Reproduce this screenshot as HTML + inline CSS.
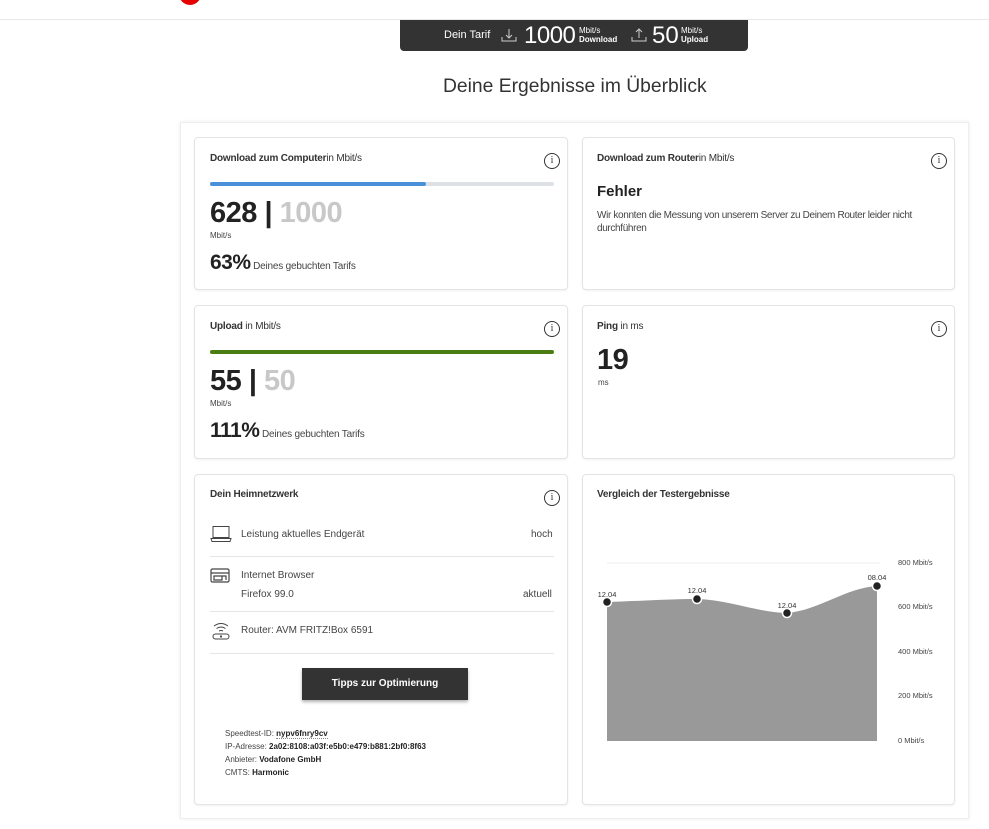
<!DOCTYPE html>
<html><head><meta charset="utf-8"><style>
*{margin:0;padding:0;box-sizing:border-box}
body{width:989px;height:829px;background:#fff;font-family:"Liberation Sans",sans-serif;color:#333;position:relative;overflow:hidden}
.a{position:absolute}
.card{position:absolute;background:#fff;border:1px solid #e4e4e4;border-radius:4px;box-shadow:0 1px 2px rgba(0,0,0,.06)}
.t{font-size:10px;color:#333;letter-spacing:-.2px}
.t b{font-weight:bold}
.info{position:absolute;width:16px;height:16px;border:1.3px solid #333;border-radius:50%;font-size:10px;text-align:center;line-height:13px;font-family:"Liberation Serif",serif}
.big{font-size:29px;font-weight:bold;color:#222;letter-spacing:-.5px}
.gr{color:#c8c8c8}
.u{font-size:8px;color:#444}
.pct{font-size:21px;font-weight:bold;color:#222;letter-spacing:-.5px}
.pct span{font-size:10px;font-weight:normal;color:#444;letter-spacing:-.2px}
.row{font-size:10px;color:#444}
.hr{position:absolute;height:1px;background:#e6e6e6}
.yl{position:absolute;font-size:7.5px;color:#444;left:898px}
</style></head><body>
<div class="a" style="left:0;top:19px;width:989px;height:1px;background:#e8e8e8"></div>
<div class="a" style="left:179px;top:-10px;width:22px;height:15px;border-radius:0 0 11px 11px;background:#e60000"></div>

<div class="a" style="left:400px;top:20px;width:348px;height:31px;background:#333;border-radius:0 0 4px 4px;color:#fff">
 <span class="a" style="left:44px;top:9px;font-size:11px">Dein Tarif</span>
 <svg class="a" style="left:101px;top:8px" width="16" height="14" viewBox="0 0 16 14" fill="none" stroke="#ccc" stroke-width="1"><path d="M8 1v9M5 7l3 3 3-3M1 9v4h14V9"/></svg>
 <span class="a" style="left:124px;top:2px;font-size:24px;letter-spacing:-.5px">1000</span>
 <span class="a" style="left:179px;top:6px;font-size:8px;line-height:9px">Mbit/s<br><b>Download</b></span>
 <svg class="a" style="left:231px;top:8px" width="16" height="14" viewBox="0 0 16 14" fill="none" stroke="#ccc" stroke-width="1"><path d="M8 10V1M5 4l3-3 3 3M1 9v4h14V9"/></svg>
 <span class="a" style="left:252px;top:2px;font-size:24px">50</span>
 <span class="a" style="left:281px;top:6px;font-size:8px;line-height:9px">Mbit/s<br><b>Upload</b></span>
</div>

<div class="a" style="left:443px;top:76px;font-size:19.3px;color:#333">Deine Ergebnisse im Überblick</div>

<div class="a" style="left:180px;top:122px;width:789px;height:697px;border:1px solid #eee;box-shadow:0 0 4px rgba(0,0,0,.08)"></div>

<div class="card" style="left:194px;top:137px;width:374px;height:153px">
 <div class="a t" style="left:15px;top:15px"><b>Download zum Computer</b>in Mbit/s</div>
 <div class="info" style="left:349px;top:15px">i</div>
 <div class="a" style="left:15px;top:44px;width:344px;height:4px;background:#dde0e5;border-radius:2px"></div>
 <div class="a" style="left:15px;top:44px;width:216px;height:4px;background:#4a90d9;border-radius:2px"></div>
 <div class="a big" style="left:15px;top:59px">628 | <span class="gr">1000</span></div>
 <div class="a u" style="left:15px;top:93px">Mbit/s</div>
 <div class="a pct" style="left:15px;top:113px">63%<span> Deines gebuchten Tarifs</span></div>
</div>
<div class="card" style="left:582px;top:137px;width:373px;height:153px">
 <div class="a t" style="left:14px;top:15px"><b>Download zum Router</b>in Mbit/s</div>
 <div class="info" style="left:348px;top:15px">i</div>
 <div class="a" style="left:14px;top:45px;font-size:15px;font-weight:bold;color:#222">Fehler</div>
 <div class="a" style="left:14px;top:71px;width:345px;font-size:10px;line-height:13px;color:#444;letter-spacing:-.35px">Wir konnten die Messung von unserem Server zu Deinem Router leider nicht durchführen</div>
</div>
<div class="card" style="left:194px;top:305px;width:374px;height:154px">
 <div class="a t" style="left:15px;top:15px"><b>Upload</b> in Mbit/s</div>
 <div class="info" style="left:349px;top:15px">i</div>
 <div class="a" style="left:15px;top:44px;width:344px;height:4px;background:#4b7d12;border-radius:2px"></div>
 <div class="a big" style="left:15px;top:59px">55 | <span class="gr">50</span></div>
 <div class="a u" style="left:15px;top:93px">Mbit/s</div>
 <div class="a pct" style="left:15px;top:113px">111%<span> Deines gebuchten Tarifs</span></div>
</div>
<div class="card" style="left:582px;top:305px;width:373px;height:154px">
 <div class="a t" style="left:14px;top:15px"><b>Ping</b> in ms</div>
 <div class="info" style="left:348px;top:15px">i</div>
 <div class="a big" style="left:14px;top:38px">19</div>
 <div class="a u" style="left:15px;top:72px">ms</div>
</div>
<div class="card" style="left:194px;top:474px;width:374px;height:331px">
 <div class="a t" style="left:15px;top:14px"><b>Dein Heimnetzwerk</b></div>
 <div class="info" style="left:349px;top:15px">i</div>
 <svg class="a" style="left:15px;top:50px" width="22" height="18" viewBox="0 0 22 18" fill="none" stroke="#444" stroke-width="1"><rect x="3" y="1.5" width="16" height="11"/><path d="M1 13.5h20l-1 3H2z"/></svg>
 <div class="a row" style="left:46px;top:54px">Leistung aktuelles Endgerät</div>
 <div class="a row" style="left:336px;top:54px">hoch</div>
 <div class="hr" style="left:15px;top:81px;width:344px"></div>
 <svg class="a" style="left:15px;top:93px" width="20" height="16" viewBox="0 0 20 16" fill="none" stroke="#444" stroke-width="1.2"><rect x="1" y="1" width="18" height="13" rx="1.5"/><path d="M1 5h18M4 8h8v4H4zM12 8h4v4"/></svg>
 <div class="a row" style="left:46px;top:95px">Internet Browser</div>
 <div class="a row" style="left:46px;top:114px">Firefox 99.0</div>
 <div class="a row" style="left:328px;top:114px">aktuell</div>
 <div class="hr" style="left:15px;top:136px;width:344px"></div>
 <svg class="a" style="left:16px;top:146px" width="20" height="20" viewBox="0 0 20 20" fill="none" stroke="#444" stroke-width="1"><path d="M3 5q7-5 14 0M5.5 7.5q4.5-3 9 0M8 10q2-1 4 0"/><rect x="2" y="13" width="16" height="5" rx="2.5"/><circle cx="10" cy="15.5" r=".6" fill="#444"/></svg>
 <div class="a row" style="left:46px;top:150px">Router: AVM FRITZ!Box 6591</div>
 <div class="hr" style="left:15px;top:178px;width:344px"></div>
 <div class="a" style="left:107px;top:193px;width:166px;height:32px;background:#333;color:#fff;font-size:10px;font-weight:bold;text-align:center;line-height:32px;box-shadow:0 2px 3px rgba(0,0,0,.3)">Tipps zur Optimierung</div>
 <div class="a" style="left:30px;top:252px;font-size:8px;line-height:13px;color:#444">Speedtest-ID: <b style="color:#222;border-bottom:1px dotted #888">nypv6fnry9cv</b><br>IP-Adresse: <b style="color:#222">2a02:8108:a03f:e5b0:e479:b881:2bf0:8f63</b><br>Anbieter: <b style="color:#222">Vodafone GmbH</b><br>CMTS: <b style="color:#222">Harmonic</b></div>
</div>
<div class="card" style="left:582px;top:474px;width:373px;height:331px">
 <div class="a t" style="left:14px;top:14px"><b>Vergleich der Testergebnisse</b></div>
</div>
<svg class="a" style="left:0;top:0" width="989" height="829">
 <line x1="607" y1="563" x2="880" y2="563" stroke="#ececec"/>
 <path d="M607 602 C640 601 670 599 697 599 C730 600 760 613 787 613 C820 610 845 588 877 586 L877 741 L607 741 Z" fill="#999"/>
 <g fill="#222" stroke="#fff" stroke-width="1.5"><circle cx="607" cy="602" r="4.5"/><circle cx="697" cy="599" r="4.5"/><circle cx="787" cy="613" r="4.5"/><circle cx="877" cy="586" r="4.5"/></g>
 <g font-family="Liberation Sans" font-size="7.5" fill="#333" text-anchor="middle"><text x="607" y="597">12.04</text><text x="697" y="593">12.04</text><text x="787" y="608">12.04</text><text x="877" y="580">08.04</text></g>
</svg>
<div class="yl" style="top:558px">800 Mbit/s</div>
<div class="yl" style="top:602px">600 Mbit/s</div>
<div class="yl" style="top:647px">400 Mbit/s</div>
<div class="yl" style="top:691px">200 Mbit/s</div>
<div class="yl" style="top:736px">0 Mbit/s</div>
</body></html>
